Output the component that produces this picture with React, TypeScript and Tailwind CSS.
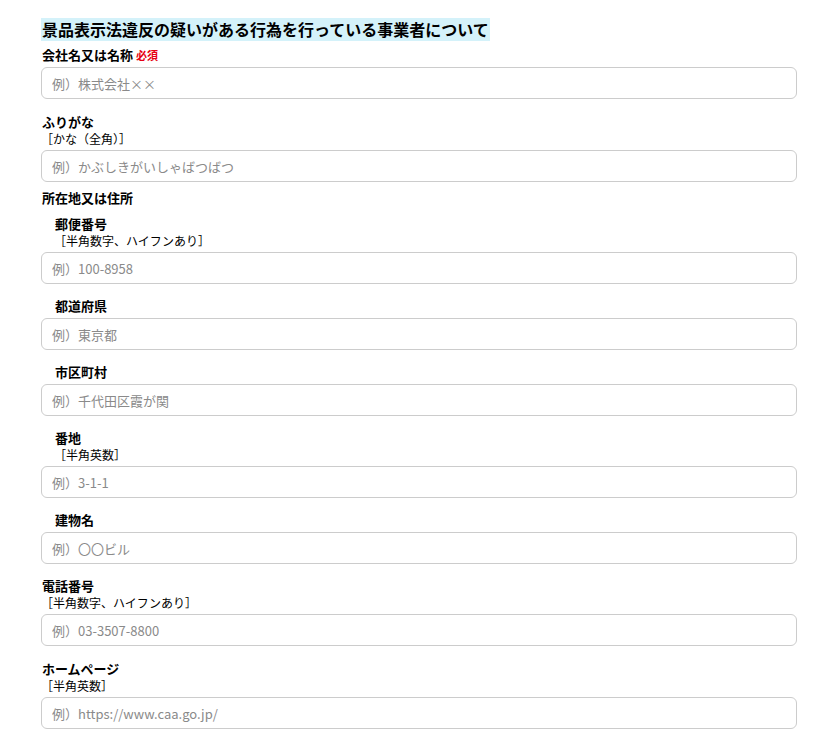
const jp = { fontFamily: '"Noto Sans CJK JP", "Noto Sans", sans-serif' }

function Field({ label, note, placeholder, required, sub, gap = 'mt-[13px]' }: {
  label: string; note?: string; placeholder: string; required?: boolean; sub?: boolean; gap?: string
}) {
  return (
    <div className={gap}>
      <div className={`flex items-baseline h-[18px] ${sub ? 'pl-[14px]' : 'pl-[1px]'}`}>
        <span className="text-[13px] font-bold leading-[18px] text-black">{label}</span>
        {required && <span className="ml-[3px] text-[11px] font-bold text-[#e60012]">必須</span>}
      </div>
      {note && (
        <div className={`text-[12px] leading-[16px] h-[16px] text-black ${sub ? 'pl-[13px]' : 'pl-[0px]'}`}>{note}</div>
      )}
      <input
        className="mt-[3px] block w-full h-[32px] rounded-[6px] border border-[#cccccc] bg-white px-[10px] text-[13px] text-black placeholder:text-[#8a8a8a] outline-none"
        placeholder={placeholder}
      />
    </div>
  )
}

export default function App() {
  return (
    <div className="min-h-[740px] bg-white pt-[17px]" style={jp}>
      <div className="ml-[41px] w-[756px] pb-[10px]">
        <h2 className="inline-block bg-[#d4f2fa] px-[1px] text-[16px] font-bold leading-[23px] text-black">
          景品表示法違反の疑いがある行為を行っている事業者について
        </h2>
        <Field gap="mt-[5px]" label="会社名又は名称" required placeholder="例）株式会社××" />
        <Field gap="mt-[14px]" label="ふりがな" note="［かな（全角）］" placeholder="例）かぶしきがいしゃばつばつ" />
        <div className="mt-[7px] pl-[1px] text-[13px] font-bold leading-[18px] h-[18px]">所在地又は住所</div>
        <Field gap="mt-[8px]" sub label="郵便番号" note="［半角数字、ハイフンあり］" placeholder="例）100-8958" />
        <Field sub label="都道府県" placeholder="例）東京都" />
        <Field sub label="市区町村" placeholder="例）千代田区霞が関" />
        <Field sub label="番地" note="［半角英数］" placeholder="例）3-1-1" />
        <Field sub label="建物名" placeholder="例）〇〇ビル" />
        <Field label="電話番号" note="［半角数字、ハイフンあり］" placeholder="例）03-3507-8800" />
        <Field gap="mt-[14px]" label="ホームページ" note="［半角英数］" placeholder="例）https://www.caa.go.jp/" />
      </div>
    </div>
  )
}
